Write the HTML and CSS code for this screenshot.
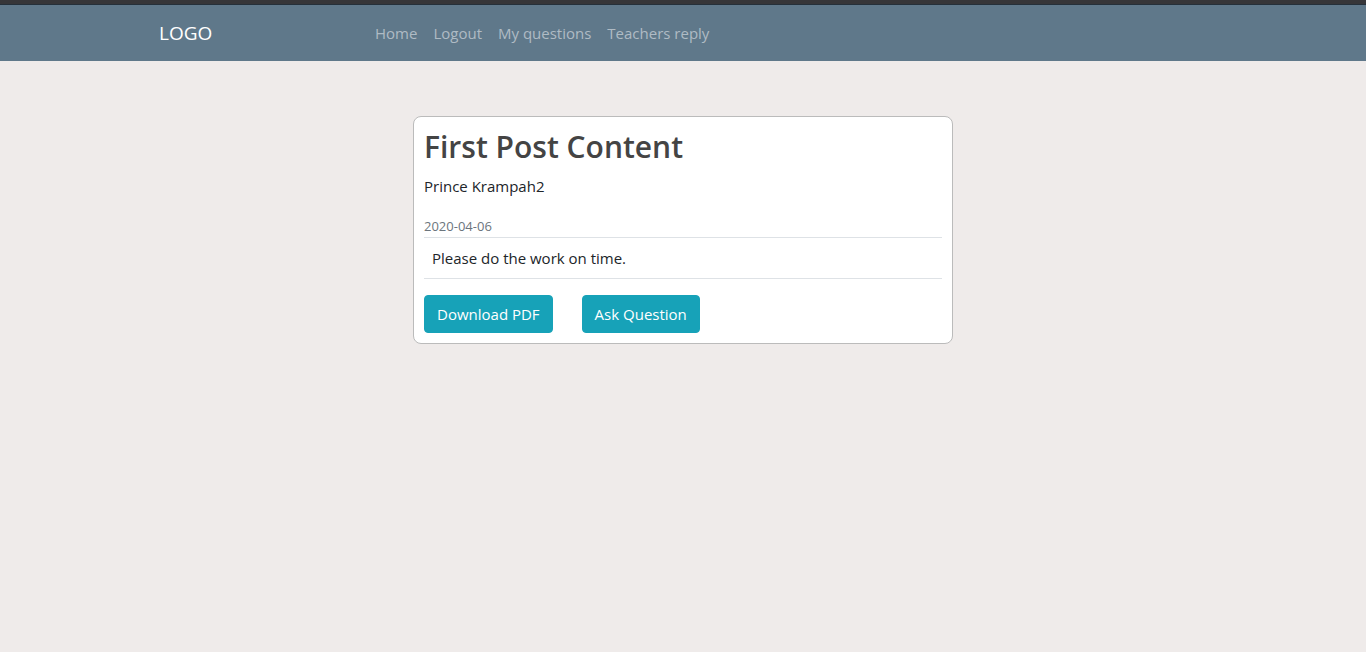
FILE: index.html
```
<!DOCTYPE html>
<html lang="en">
<head>
<meta charset="utf-8">
<title>First Post Content</title>
<meta name="viewport" content="width=device-width, initial-scale=1">
<link rel="stylesheet" href="styles.css">
</head>
<body>
<header class="navbar">
  <div class="container">
    <a class="brand" href="#">LOGO</a>
    <nav class="nav">
      <a href="#">Home</a>
      <a href="#">Logout</a>
      <a href="#">My questions</a>
      <a href="#">Teachers reply</a>
    </nav>
  </div>
</header>
<main class="page">
  <article class="post">
    <h1 class="title">First Post Content</h1>
    <p class="author">Prince Krampah2</p>
    <time class="date" datetime="2020-04-06">2020-04-06</time>
    <p class="body">Please do the work on time.</p>
    <div class="actions">
      <button class="btn" type="button">Download PDF</button>
      <button class="btn" type="button">Ask Question</button>
    </div>
  </article>
</main>
</body>
</html>
```
FILE: styles.css
```
* { box-sizing: border-box; }
body {
  margin: 0;
  background: #efebea;
  color: #212529;
  font: 15px/24px "Open Sans", "Noto Sans", sans-serif;
}
.navbar {
  background: #5f788a;
  border-top: 4px solid #363639;
  box-shadow: inset 0 1px #25303a;
  padding: 9px 16px 8px;
}
.container {
  display: flex;
  align-items: center;
  max-width: 1048px;
  min-height: 40px;
  margin: 0 auto;
}
.brand {
  flex: 0 0 216px;
  color: #fff;
  font-size: 19px;
  text-decoration: none;
}
.nav { display: flex; gap: 16px; }
.nav a {
  color: #afbbc4;
  text-decoration: none;
}
.page { padding: 55px 16px; }
.post {
  max-width: 540px;
  margin: 0 auto;
  padding: 10px;
  background: #fff;
  border: 1px solid #bbb;
  border-radius: 8px;
}
.title {
  margin: 0 0 7px;
  color: #444;
  font-size: 30px;
  line-height: 40px;
  font-weight: 600;
}
.author { margin: 0 0 17px; }
.date {
  display: block;
  color: #6c757d;
  font-size: 13px;
  line-height: 22px;
}
.body {
  margin: 0 0 16px;
  padding: 8px;
  border: solid #dee2e6;
  border-width: 1px 0;
}
.actions { display: flex; gap: 29px; }
.btn {
  padding: 6px 12px;
  border: 1px solid #17a2b8;
  border-radius: 4px;
  background: #17a2b8;
  color: #fff;
  font: inherit;
}
```
